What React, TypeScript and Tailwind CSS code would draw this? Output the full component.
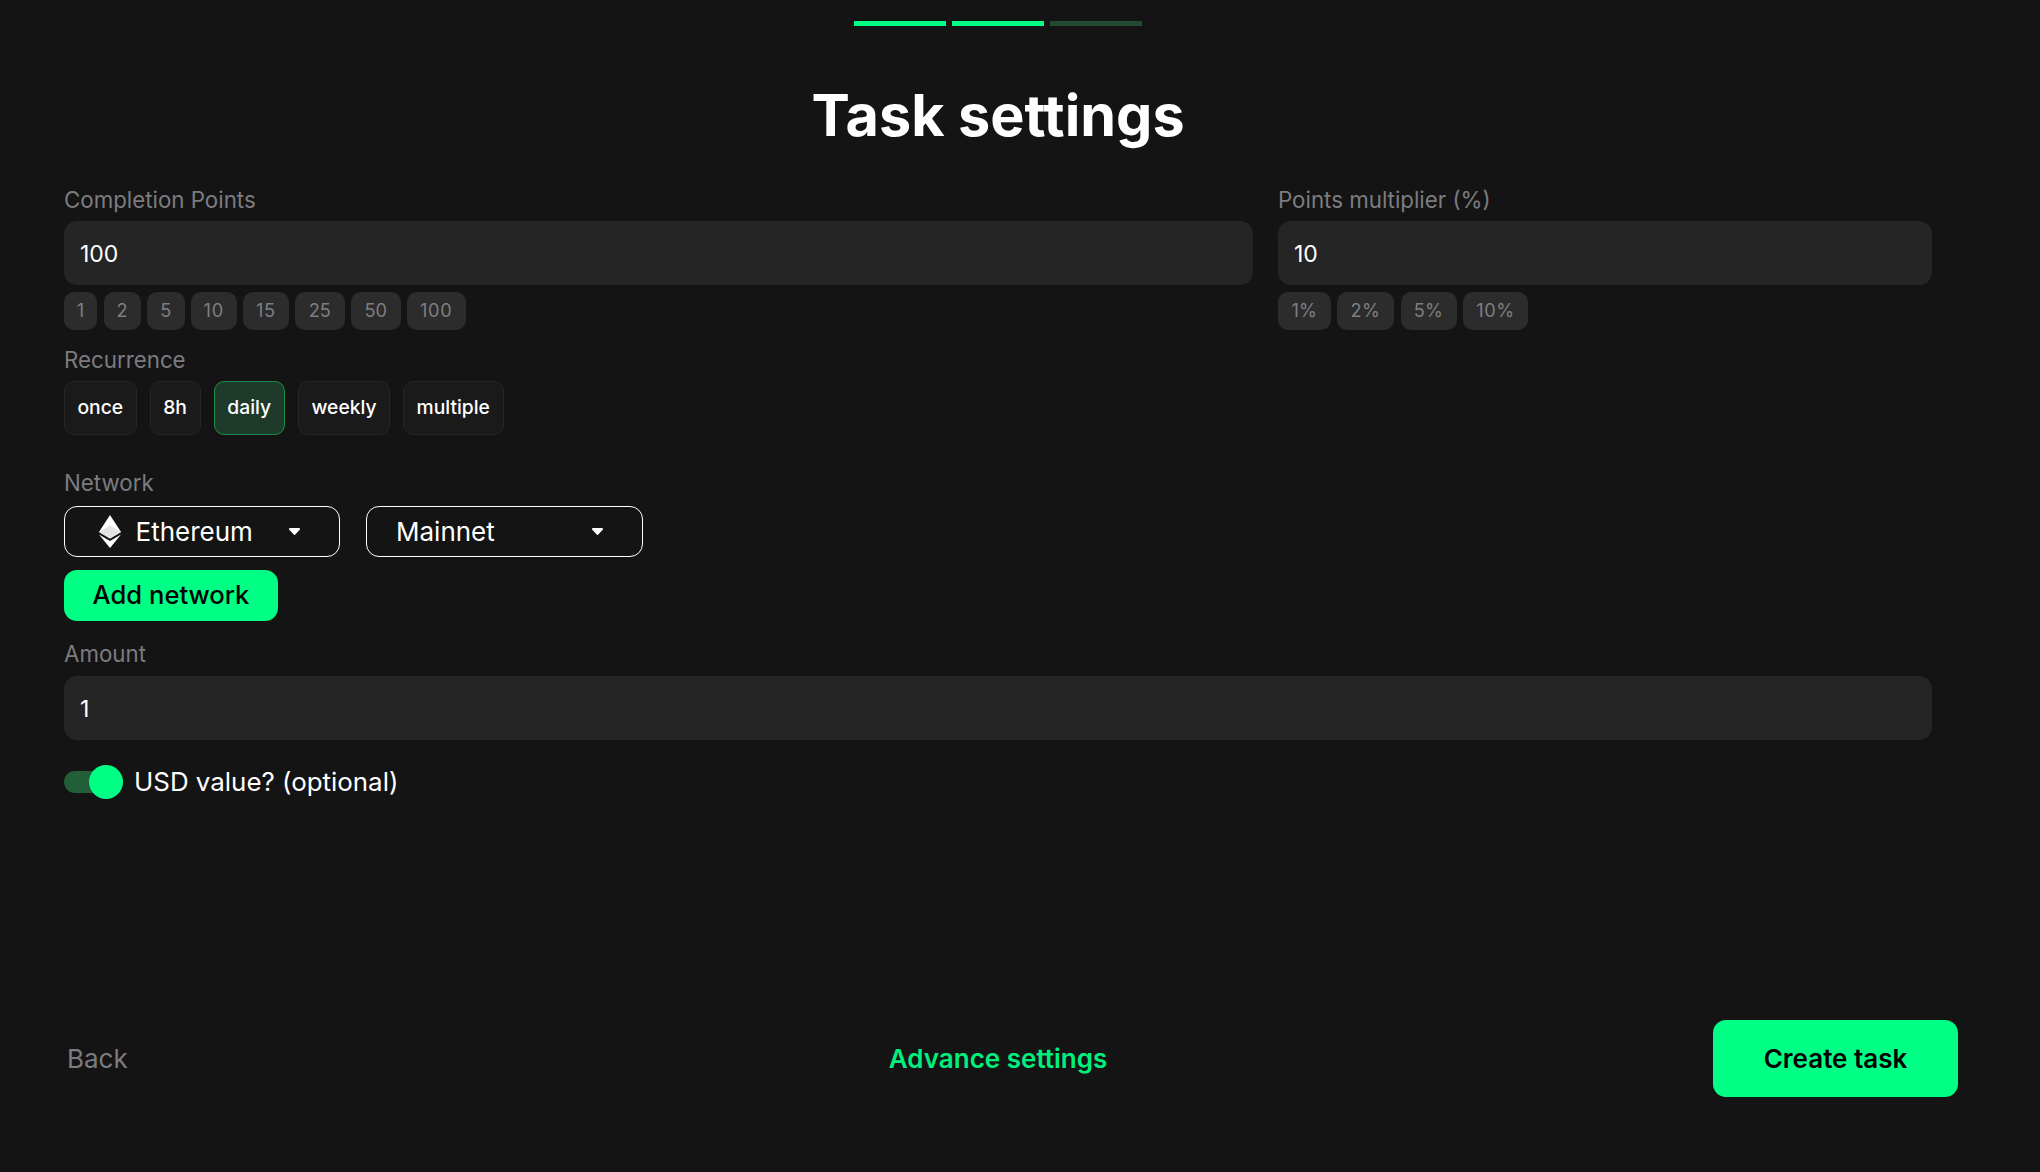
const pointOptions = [
  { label: "1", size: "w-[33px]" },
  { label: "2", size: "w-[37px]" },
  { label: "5", size: "w-[37.5px]" },
  { label: "10", size: "w-[45.5px] tracking-[0.8px]" },
  { label: "15", size: "w-[45.5px] tracking-[0.4px]" },
  { label: "25", size: "w-[49.5px]" },
  { label: "50", size: "w-[49.5px]" },
  { label: "100", size: "w-[58.5px] tracking-[0.8px]" },
]
const multiplierOptions = [
  { label: "1%", size: "w-[52.5px]" },
  { label: "2%", size: "w-[57px] tracking-[0.4px]" },
  { label: "5%", size: "w-[56px] tracking-[0.4px]" },
  { label: "10%", size: "w-[65px] tracking-[0.6px]" },
]
const recurrenceOptions = [
  { label: "once", size: "w-[72.5px]" },
  { label: "8h", size: "w-[51px]" },
  { label: "daily", size: "w-[71.5px]" },
  { label: "weekly", size: "w-[92px]" },
  { label: "multiple", size: "w-[100.5px]" },
]

function Chip({ label, size }: { label: string; size: string }) {
  return (
    <button className={"h-[38px] pb-[1px] rounded-[10px] bg-[#2c2c2c] text-[#7e7e82] text-[18.2px] leading-none " + size}>
      {label}
    </button>
  )
}

function FieldInput({ value }: { value: string }) {
  return (
    <div className="h-[64px] w-full flex items-center pl-[16px] pt-[2px] rounded-[13px] bg-[#252525] text-white text-[23px]">
      {value}
    </div>
  )
}

function Label({ children }: { children: string }) {
  return <div className="text-[#7c7c80] text-[22.3px] leading-[28px]">{children}</div>
}

function Caret() {
  return (
    <svg width="11" height="7" viewBox="0 0 11 7" fill="white">
      <path d="M1 0h9a1 1 0 0 1 .75 1.66L6.25 6.6a1 1 0 0 1-1.5 0L.25 1.66A1 1 0 0 1 1 0z" />
    </svg>
  )
}

function EthLogo() {
  return (
    <svg width="22" height="33" viewBox="0 0 22 33" fill="white">
      <path d="M11 0 22 17 11 23.5 0 17z" />
      <path d="M0 19.6 11 26 22 19.6 11 33z" />
      <path d="M11 10.5 22 17 11 23.5 0 17z" fill="#e4e4e4" />
    </svg>
  )
}

export default function App() {
  return (
    <div className="w-[2040px] h-[1172px] bg-[#141414] text-white overflow-hidden flex flex-col font-['Inter',sans-serif]">
      <div className="w-[1996px] flex justify-center gap-[6px] pt-[21px]">
        <div className="w-[92px] h-[5px] bg-[#00ff85]" />
        <div className="w-[92px] h-[5px] bg-[#00ff85]" />
        <div className="w-[92px] h-[5px] bg-[#214a31]" />
      </div>

      <h1 className="w-[1996px] mt-[53px] text-center text-[57.5px] leading-[72px] font-bold">Task settings</h1>

      <div className="mt-[35px] pl-[64px] w-[1932px]">
        <div className="grid grid-cols-[1189px_654px] gap-x-[25px]">
          <div>
            <Label>Completion Points</Label>
            <div className="mt-[7px]"><FieldInput value="100" /></div>
            <div className="mt-[7px] flex gap-[6.5px]">
              {pointOptions.map((o) => <Chip key={o.label} label={o.label} size={o.size} />)}
            </div>
          </div>
          <div>
            <Label>Points multiplier (%)</Label>
            <div className="mt-[7px]"><FieldInput value="10" /></div>
            <div className="mt-[7px] flex gap-[6.5px]">
              {multiplierOptions.map((o) => <Chip key={o.label} label={o.label} size={o.size} />)}
            </div>
          </div>
        </div>

        <div className="mt-[16px]"><Label>Recurrence</Label></div>
        <div className="mt-[7px] flex gap-[13px]">
          {recurrenceOptions.map((o) => (
            <button
              key={o.label}
              className={
                o.label === "daily"
                  ? "h-[54px] pb-[1px] rounded-[10px] border border-[#1f8a45] bg-[#1e3a2a] text-[19.3px] font-medium " + o.size
                  : "h-[54px] pb-[1px] rounded-[10px] border border-[#262626] bg-[#1a1a1a] text-[19.3px] font-medium " + o.size
              }
            >
              {o.label}
            </button>
          ))}
        </div>

        <div className="mt-[34px]"><Label>Network</Label></div>
        <div className="mt-[9px] flex gap-[26px]">
          <button className="w-[276px] h-[51px] flex items-center pl-[33.5px] pr-[39px] rounded-[13px] border-[1.5px] border-white text-[26px]">
            <EthLogo />
            <span className="ml-[15px] flex-1 text-left">Ethereum</span>
            <Caret />
          </button>
          <button className="w-[277px] h-[51px] flex items-center pl-[29px] pr-[39px] rounded-[13px] border-[1.5px] border-white text-[26px]">
            <span className="flex-1 text-left">Mainnet</span>
            <Caret />
          </button>
        </div>

        <button className="mt-[13px] block w-[214px] h-[51px] rounded-[13px] bg-[#00ff85] text-black text-[25.6px] font-medium">
          Add network
        </button>

        <div className="mt-[19px]"><Label>Amount</Label></div>
        <div className="mt-[8px]"><FieldInput value="1" /></div>

        <div className="mt-[25px] flex items-center h-[34px]">
          <div className="relative w-[59px] h-[22px] rounded-full bg-[#225f38]">
            <div className="absolute right-0 top-[-6px] w-[34px] h-[34px] rounded-full bg-[#00ff85]" />
          </div>
          <span className="ml-[11px] text-[25.9px] leading-none">USD value? (optional)</span>
        </div>
      </div>

      <div className="mt-[221px] pl-[64px] pr-[82px] flex items-center justify-between relative">
        <button className="pl-[3px] pb-[1px] text-[#7c7c80] text-[26px]">Back</button>
        <div className="absolute left-0 w-[1996px] flex justify-center">
          <button className="pb-[1px] text-[#00f07e] text-[26px] font-semibold">Advance settings</button>
        </div>
        <button className="w-[245px] h-[77px] pb-[1px] rounded-[13px] bg-[#00ff85] text-black text-[26px] font-semibold">
          Create task
        </button>
      </div>
    </div>
  )
}
